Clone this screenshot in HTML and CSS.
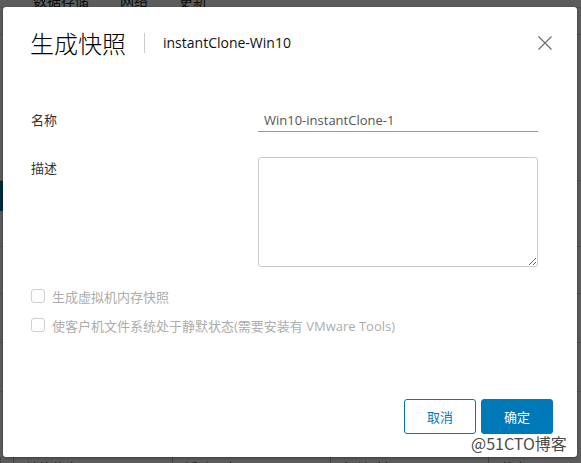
FILE: index.html
```html
<!DOCTYPE html>
<html lang="zh-CN">
<head>
<meta charset="utf-8">
<title>生成快照</title>
<link rel="stylesheet" href="styles.css">
</head>
<body>
<div class="page">
  <div class="tabs"><span>数据存储</span><span>网络</span><span>更新</span></div>
  <div class="rows">
    <div class="row r1"></div>
    <div class="row r2"></div>
    <div class="row r3"><span class="selected"></span></div>
    <div class="row r4"></div>
    <div class="row r5"></div>
    <div class="row r6"></div>
    <div class="row r7"></div>
  </div>
  <div class="tfoot">
    <div class="cell"></div>
    <div class="cell">计算信息</div>
    <div class="cell">活动日志</div>
    <div class="cell">相关对象</div>
    <div class="cell">状态</div>
  </div>
</div>
<div class="overlay"></div>
<div class="modal">
  <div class="header">
    <span class="title">生成快照</span>
    <span class="sep"></span>
    <span class="subtitle">instantClone-Win10</span>
    <span class="close">
      <svg width="16" height="16" viewBox="0 0 16 16"><path d="M1.5 1.5 L14.5 14.5 M14.5 1.5 L1.5 14.5" stroke="#6a6a6a" stroke-width="1.1" fill="none"/></svg>
    </span>
  </div>
  <div class="form">
    <div class="label">名称</div>
    <div class="input">Win10-instantClone-1</div>
    <div class="label top">描述</div>
    <textarea class="textarea"></textarea>
  </div>
  <div class="checks">
    <div class="check"><span class="box"></span><span>生成虚拟机内存快照</span></div>
    <div class="check"><span class="box"></span><span>使客户机文件系统处于静默状态(需要安装有 VMware Tools)</span></div>
  </div>
  <div class="footer">
    <button class="btn btn-outline">取消</button>
    <button class="btn btn-primary">确定</button>
  </div>
</div>
<div class="watermark">@51CTO博客</div>
</body>
</html>
```
FILE: styles.css
```css
html, body {
  margin: 0;
  padding: 0;
}
body {
  width: 581px;
  height: 463px;
  overflow: hidden;
  position: relative;
  font-family: "Open Sans", "Noto Sans CJK SC", sans-serif;
  color: #333;
}
.page {
  height: 463px;
  background: #fff;
  display: flex;
  flex-direction: column;
}
.tabs {
  height: 7px;
  display: flex;
  align-items: flex-end;
  gap: 31px;
  padding-left: 33px;
  font-family: "Noto Sans CJK SC", sans-serif;
  font-size: 14px;
  line-height: 14px;
  color: #222;
  border-bottom: 1px solid #ddd;
}
.rows {
  display: flex;
  flex-direction: column;
}
.row {
  border-bottom: 1px solid #d8d8d8;
  display: flex;
}
.r1 { height: 26px; }
.r2 { height: 145px; }
.r3 { height: 30px; border-bottom: none; }
.r4 { height: 35px; }
.r5 { height: 46px; }
.r6 { height: 48px; }
.r7 { height: 48px; }
.selected {
  width: 220px;
  background: #0f6fa8;
}
.tfoot {
  margin-top: auto;
  height: 6px;
  display: grid;
  grid-template-columns: 13px 159px 158px 158px 1fr;
  font-family: "Noto Sans CJK SC", sans-serif;
  font-size: 13px;
  line-height: 22px;
  color: #222;
}
.cell {
  border-left: 1px solid #bbb;
  padding-left: 12px;
  overflow: hidden;
  white-space: nowrap;
}
.overlay {
  position: absolute;
  inset: 0;
  background: rgba(0, 0, 0, 0.64);
}
.modal {
  position: absolute;
  left: 3px;
  top: 7px;
  width: 574px;
  height: 450px;
  box-sizing: border-box;
  background: #fff;
  border-radius: 3px;
  box-shadow: 0 1px 3px rgba(0, 0, 0, 0.35);
  display: flex;
  flex-direction: column;
  padding: 24px 24px 23px 27px;
}
.header {
  display: flex;
  align-items: center;
  height: 24px;
}
.title {
  font-family: "Noto Sans CJK SC", sans-serif;
  font-weight: 300;
  font-size: 24px;
  line-height: 24px;
  color: #000;
}
.sep {
  width: 1px;
  height: 20px;
  background: #ccc;
  margin: 0 18px;
}
.subtitle {
  font-size: 14px;
  line-height: 20px;
  color: #111;
}
.close {
  margin-left: auto;
  display: flex;
}
.form {
  margin-top: 53px;
  display: grid;
  grid-template-columns: 228px 280px;
  row-gap: 25px;
  align-items: center;
}
.label {
  font-family: "Noto Sans CJK SC", sans-serif;
  font-size: 13px;
  line-height: 22px;
  color: #333;
  padding-left: 1px;
}
.label.top {
  align-self: start;
}
.input {
  height: 23px;
  border-bottom: 1px solid #9a9a9a;
  padding-left: 6px;
  font-size: 13px;
  line-height: 24px;
  color: #555;
}
.textarea {
  box-sizing: border-box;
  width: 280px;
  height: 110px;
  margin: 0;
  border: 1px solid #ccc;
  border-radius: 3px;
  background: #fff;
  font: inherit;
}
.checks {
  margin-top: 18px;
  display: flex;
  flex-direction: column;
  gap: 7px;
}
.check {
  display: flex;
  align-items: center;
  gap: 7px;
  height: 22px;
  font-size: 13px;
  color: #adadad;
}
.box {
  box-sizing: border-box;
  width: 14px;
  height: 14px;
  margin-left: 1px;
  border: 1px solid #cfcfcf;
  border-radius: 3px;
}
.footer {
  margin-top: auto;
  display: flex;
  justify-content: flex-end;
  gap: 5px;
}
.btn {
  width: 72px;
  height: 35px;
  border-radius: 3px;
  border: 1px solid #0079b8;
  font-family: "Noto Sans CJK SC", sans-serif;
  font-size: 13px;
  padding: 0;
}
.btn-outline {
  background: #fff;
  color: #0079b8;
}
.btn-primary {
  background: #0079b8;
  color: #fff;
}
.watermark {
  position: absolute;
  left: 471px;
  top: 433px;
  font-family: "Noto Sans CJK SC", sans-serif;
  font-size: 16px;
  line-height: 20px;
  color: #4a4a4a;
  text-shadow: 0 0 2px #fff, 0 0 1px #fff;
}
```
